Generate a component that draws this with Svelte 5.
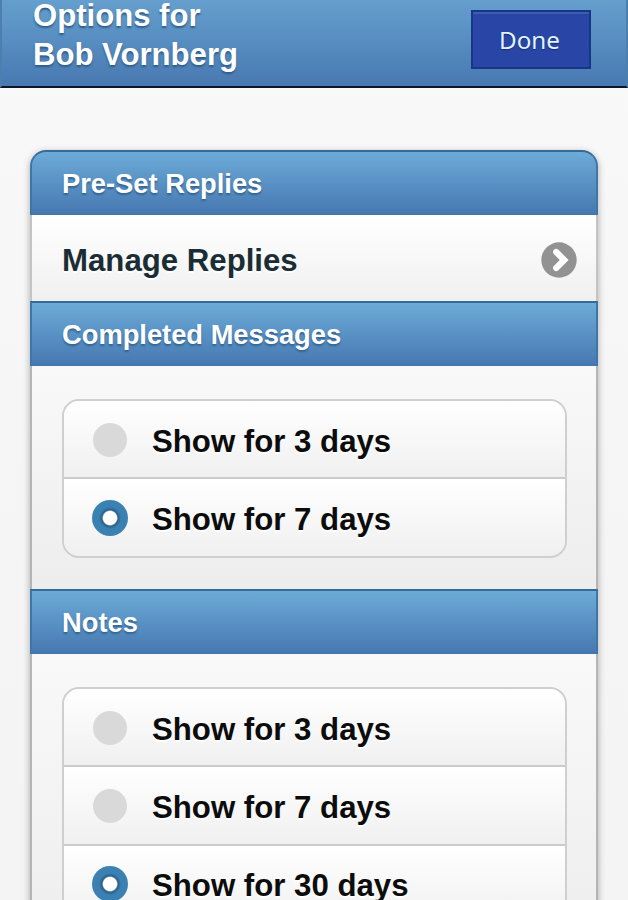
<script lang="ts">
  const name = 'Bob Vornberg';

  let completed = $state(7);
  let notes = $state(30);
</script>

{#snippet options(group: string, days: number[], value: number, select: (d: number) => void)}
  <div class="options">
    {#each days as d}
      <label class="option">
        <input
          type="radio"
          name={group}
          checked={value === d}
          onchange={() => select(d)}
        />
        <span class="radio" class:on={value === d}></span>
        <span class="label">Show for {d} days</span>
      </label>
    {/each}
  </div>
{/snippet}

<div class="page">
  <header class="header">
    <h1>Options for<br />{name}</h1>
    <button class="done">Done</button>
  </header>

  <main class="list">
    <h2 class="divider first">Pre-Set Replies</h2>
    <a class="link" href="#replies">
      <span>Manage Replies</span>
      <svg width="36" height="36" viewBox="0 0 36 36">
        <circle cx="18" cy="18" r="17.7" fill="#929292" />
        <path
          d="M15.2 10L23.2 18L15.2 26"
          fill="none"
          stroke="#fff"
          stroke-width="6.2"
          stroke-linecap="round"
        />
      </svg>
    </a>

    <h2 class="divider">Completed Messages</h2>
    <section class="panel">
      {@render options('completed', [3, 7], completed, (d) => (completed = d))}
    </section>

    <h2 class="divider">Notes</h2>
    <section class="panel">
      {@render options('notes', [3, 7, 30], notes, (d) => (notes = d))}
    </section>
  </main>
</div>

<style>
  :global(body) {
    background: #f6f6f6;
  }

  .page {
    box-sizing: border-box;
    height: 900px;
    overflow: hidden;
    background: linear-gradient(#f9f9f9, #f5f5f5 60%, #f4f4f4);
    font-family: 'Liberation Sans', Arial, sans-serif;
    font-weight: bold;
  }

  .header {
    box-sizing: border-box;
    height: 88px;
    display: flex;
    align-items: flex-start;
    justify-content: space-between;
    padding: 0 35px 0 31px;
    border: 2px solid #4a7fb0;
    border-top: none;
    border-bottom-color: #0b1728;
    background: linear-gradient(#659fce, #4879b1);
  }

  h1 {
    margin: -4px 0 0;
    font-size: 31.1px;
    line-height: 39px;
    color: #fff;
    text-shadow: 0 2px 2px #2f5c88;
  }

  .done {
    box-sizing: border-box;
    width: 120px;
    height: 59px;
    margin: 10px 0 0;
    padding: 0 3px 0 0;
    border: 2px solid #183586;
    border-radius: 0;
    background: #2946a6;
    box-shadow: inset 0 2px 0 #3c5cb0;
    font: 24.2px 'Noto Sans', sans-serif;
    color: #e2f4ff;
    text-shadow: 0 1px 1px #142c74;
  }

  .list {
    margin: 62px 30px 0;
    border-radius: 16px 16px 0 0;
    box-shadow: 0 2px 7px rgb(0 0 0 / 0.32);
  }

  .divider {
    box-sizing: border-box;
    height: 65px;
    margin: 0;
    padding: 0 30px;
    border: 2px solid #3f76a6;
    border-bottom-color: #4377ae;
    border-top-color: #356b98;
    background: linear-gradient(#6cabd8, #4779b2);
    font-size: 27.3px;
    line-height: 64px;
    color: #fff;
    text-shadow: 0 2px 2px #34638f;
  }
  .divider.first {
    border-radius: 16px 16px 0 0;
  }

  .link {
    box-sizing: border-box;
    height: 86px;
    display: flex;
    align-items: center;
    justify-content: space-between;
    padding: 3px 19px 0 30px;
    border: 2px solid #c4c4c4;
    border-top: none;
    border-bottom: none;
    background: linear-gradient(#fff, #f0f0f0);
    font-size: 31.2px;
    color: #1b2d34;
    text-decoration: none;
    text-shadow: 0 2px 0 #fff;
  }
  .link span {
    padding-top: 3px;
  }

  .panel {
    box-sizing: border-box;
    height: 223px;
    padding: 33px 29px 0 30px;
    border: 2px solid #b5b5b5;
    border-top: none;
    border-bottom: none;
    background: linear-gradient(#f9f9f9, #ededed);
  }
  .panel:last-child {
    height: 302px;
  }

  .options {
    border: 2px solid #cfcfcf;
    border-radius: 17px;
    overflow: hidden;
  }

  .option {
    box-sizing: border-box;
    height: 78.4px;
    display: flex;
    align-items: center;
    padding-left: 28px;
    border-bottom: 2px solid #cbcbcb;
    background: linear-gradient(#fff, #f0f0f0);
    font-size: 31.2px;
    color: #0c0c0c;
  }
  .option:last-child {
    height: 76.4px;
    border-bottom: none;
  }
  .option input {
    position: absolute;
    opacity: 0;
  }

  .radio {
    box-sizing: border-box;
    width: 34px;
    height: 34px;
    margin: 1px 25px 0 1px;
    border-radius: 50%;
    background: #d9d9d9;
  }
  .radio.on {
    width: 36px;
    height: 36px;
    margin: 1px 24px 0 0;
    background: radial-gradient(
      circle,
      #fff 6.6px,
      #2a5f85 8px,
      #3a80b1 11px,
      #3b85b7 100%
    );
  }

  .label {
    padding-top: 5px;
    text-shadow: 0 2px 0 #fff;
  }
</style>
